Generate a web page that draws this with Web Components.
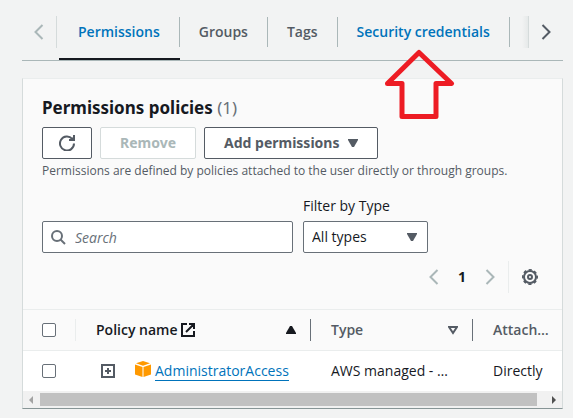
<!DOCTYPE html>
<html lang="en">
<head>
<meta charset="utf-8">
<title>Permissions</title>
<style>
  body {
    margin: 0;
    background: #f2f3f3;
    color: #16191f;
    font: 14px/20px "Open Sans", "Noto Sans", sans-serif;
    --strong: "Noto Sans", "Open Sans", sans-serif;
    --blue: #0073bb;
    --grey: #545b64;
    --muted: #aab7b8;
    --line: #eaeded;
  }
</style>
</head>
<body>
<user-page>
  <tab-bar slot="tabs">
    <tab-item selected>Permissions</tab-item>
    <tab-item>Groups</tab-item>
    <tab-item>Tags</tab-item>
    <tab-item link>Security credentials</tab-item>
  </tab-bar>
  <policy-card>
    <policy-header slot="header" count="(1)">
      Permissions policies
      <action-button slot="actions" kind="icon" label="Refresh"><ui-icon name="refresh"></ui-icon></action-button>
      <action-button slot="actions" disabled>Remove</action-button>
      <action-button slot="actions">Add permissions <ui-icon name="down"></ui-icon></action-button>
      <span slot="description">Permissions are defined by policies attached to the user directly or through groups.</span>
    </policy-header>
    <policy-filters slot="filters"></policy-filters>
    <page-controls slot="filters"></page-controls>
    <policy-table></policy-table>
    <scroll-strip></scroll-strip>
  </policy-card>
  <callout-arrow slot="callout"></callout-arrow>
</user-page>

<script>
const define = (name, html, setup) => {
  const template = document.createElement('template');
  template.innerHTML = '<style>:host,*{box-sizing:border-box}</style>' + html;
  customElements.define(name, class extends HTMLElement {
    constructor() {
      super();
      this.attachShadow({ mode: 'open' }).append(template.content.cloneNode(true));
    }
    connectedCallback() { if (setup) setup(this, this.shadowRoot); }
  });
};

const icons = {
  refresh: [16, '<path d="M13.200 3.800A7 7 0 1 0 15 8.500" fill="none" stroke="currentColor" stroke-width="2"/><path d="M10 5h5V0" fill="none" stroke="currentColor" stroke-width="2"/><path d="M11 5l4-4v4z" fill="currentColor"/>'],
  down: [10, '<path d="M0 1h10v1L6 9H4L0 2z" fill="currentColor"/>'],
  up: [10, '<path d="M0 9h10V8L6 1H4L0 8z" fill="currentColor"/>'],
  sort: [10, '<path d="M1 2h8L5 8z" fill="none" stroke="currentColor" stroke-width="2"/>'],
  prev: [16, '<path d="M11.500 1L4.500 8l7 7" fill="none" stroke="currentColor" stroke-width="2"/>'],
  next: [16, '<path d="M4.500 1l7 7-7 7" fill="none" stroke="currentColor" stroke-width="2"/>'],
  search: [16, '<circle cx="7" cy="7" r="5" fill="none" stroke="currentColor" stroke-width="2"/><path d="M10.500 10.500L15 15" stroke="currentColor" stroke-width="2"/>'],
  gear: [16, '<circle cx="8" cy="8" r="6" fill="none" stroke="currentColor" stroke-width="2"/><circle cx="8" cy="8" r="7.200" fill="none" stroke="currentColor" stroke-width="1.600" stroke-dasharray="3.200 2.455" stroke-dashoffset="1.600"/><circle cx="8" cy="8" r="2" fill="none" stroke="currentColor" stroke-width="2"/>'],
  external: [14, '<path d="M6 1H1v12h12V8M8 1h5v5M13 1L5 9" fill="none" stroke="currentColor" stroke-width="2"/>'],
  plus: [14, '<path d="M1 1h12v12H1zM4 7h6M7 4v6" fill="none" stroke="currentColor" stroke-width="2"/>'],
  cube: [16, '<path d="M0 3.500L7.500 6v10L0 13.500zM16 3.500L8.500 6v10l7.500-2.500zM8 0l7 2.300L8 4.700 1 2.300z" fill="#f90"/>'],
};
define('ui-icon', `<style>:host{display:inline-flex;flex:none}svg{display:block}</style>`, (el, root) => {
  const [size, body] = icons[el.getAttribute('name')];
  root.innerHTML += `<svg width="${size}" height="${size}" viewBox="0 0 ${size} ${size}" aria-hidden="true">${body}</svg>`;
});

define('user-page', `<style>
  :host{display:block;padding:16px 10px 9px 22px}
</style><slot name="tabs"></slot><slot></slot><slot name="callout"></slot>`);

define('tab-bar', `<style>
  :host{display:flex;align-items:flex-start;height:45px;border-bottom:1px solid var(--muted);margin-bottom:17px}
  button{flex:none;width:35px;height:32px;padding:0;border:0;background:none;color:var(--grey);display:grid;place-items:center}
  .left{color:var(--muted);border-right:1px solid #d5dbdb}
  .right{border-left:1px solid #d5dbdb}
  nav{flex:1;display:flex;overflow:hidden;padding-left:2px}
  .fade{flex:none;width:6px;height:32px;background:linear-gradient(90deg,transparent,#e6e9e9)}
</style>
<button class="left" aria-label="Scroll left" disabled><ui-icon name="prev"></ui-icon></button>
<nav><slot></slot></nav><span class="fade"></span>
<button class="right" aria-label="Scroll right"><ui-icon name="next"></ui-icon></button>`);

define('tab-item', `<style>
  :host{display:block;flex:none;height:44px;color:var(--grey);font-weight:600}
  a{display:block;height:30px;margin-top:1px;padding:5px 19px 0;border-right:1px solid var(--muted);color:inherit;text-decoration:none}
  :host([selected]),:host([link]){color:var(--blue)}
  :host([selected]){border-bottom:2px solid #16191f}
</style><a href="#"><slot></slot></a>`);

define('policy-card', `<style>
  :host{display:block;background:#fafafa;border:1px solid #d5dbdb;border-top-color:#eaeded;border-bottom-color:#879596}
  .top{padding:18px 19px 16px}
</style><div class="top"><slot name="header"></slot><slot name="filters"></slot></div><slot></slot>`);

define('policy-header', `<style>
  :host{display:block}
  h2{margin:0 0 8px;font:700 17px/22px var(--strong)}
  h2 span{font-weight:400;color:#687078}
  .actions{display:flex;gap:8px}
  p{margin:4px 0 0;font-size:12px;line-height:16px;color:var(--grey)}
</style><h2><slot></slot><span></span></h2><div class="actions"><slot name="actions"></slot></div><p><slot name="description"></slot></p>`,
(el, root) => { root.querySelector('h2 span').textContent = el.getAttribute('count'); });

define('action-button', `<style>
  :host{display:block}
  button{display:flex;align-items:center;gap:9px;height:32px;padding:0 19px;border:1px solid var(--grey);border-radius:2px;background:#fff;color:var(--grey);font:700 14px/20px var(--strong);white-space:nowrap}
  :host([kind=icon]) button{padding:0 16px}
  button:disabled{border-color:#d5dbdb;color:var(--muted)}
</style><button type="button"><slot></slot></button>`, (el, root) => {
  const button = root.querySelector('button');
  button.disabled = el.hasAttribute('disabled');
  if (el.hasAttribute('label')) button.setAttribute('aria-label', el.getAttribute('label'));
});

define('policy-filters', `<style>
  :host{display:flex;align-items:flex-end;gap:10px;margin-top:17px}
  .search{display:grid;flex:0 1 251px;align-items:center}
  .search>*,.pick>*{grid-area:1/1}
  .search ui-icon{margin-left:8px;color:#687078}
  input,select{width:100%;height:32px;border:1px solid #687078;border-radius:2px;background:#fff;color:inherit;font:inherit;margin:0}
  input{padding:0 8px 0 32px}
  input::placeholder{font-style:italic;color:#687078;opacity:1}
  .type{width:125px}
  label{display:block;margin-bottom:5px}
  .pick{display:grid;align-items:center}
  .pick ui-icon{justify-self:end;margin-right:11px;color:var(--grey);pointer-events:none}
  select{appearance:none;padding:0 8px}
</style>
<div class="search"><input type="search" placeholder="Search" aria-label="Search"><ui-icon name="search"></ui-icon></div>
<div class="type"><label for="type">Filter by Type</label><div class="pick"><select id="type"><option>All types</option></select><ui-icon name="down"></ui-icon></div></div>`);

define('page-controls', `<style>
  :host{display:flex;justify-content:flex-end;align-items:center;height:32px;margin-top:8px}
  button{display:grid;place-items:center;padding:0;border:0;background:none;color:var(--muted);font:inherit}
  .num{width:40px;color:#16191f;font:700 14px/20px var(--strong)}
  .gear{height:32px;margin-left:10px;padding:0 5px 0 13px;border-left:1px solid var(--line);color:var(--grey)}
</style>
<button aria-label="Previous page" disabled><ui-icon name="prev"></ui-icon></button>
<button class="num">1</button>
<button aria-label="Next page" disabled><ui-icon name="next"></ui-icon></button>
<button class="gear" aria-label="Preferences"><ui-icon name="gear"></ui-icon></button>`);

define('policy-table', `<style>
  :host{display:block}
  table{width:100%;table-layout:fixed;border-collapse:separate;border-spacing:0}
  th,td{padding:0;height:40px;text-align:left;vertical-align:middle;white-space:nowrap}
  th{height:42px;border-top:1px solid var(--line);border-bottom:1px solid var(--line);color:var(--grey);font-weight:600}
  td{background:#fff}
  .check{width:53px}.name{width:235px}.kind{width:162px}
  .cell{display:flex;align-items:center;gap:4px;height:22px;padding-left:20px}
  .check .cell,td:first-child .cell{padding-left:19px}
  th .cell{border-right:1px solid #687078;padding-right:14px}
  th.check .cell{border-color:var(--line)}
  th:last-child .cell{border:0;padding-right:8px}
  .cell>.end{margin-left:auto}
  .dark{color:#16191f}
  input{appearance:none;width:14px;height:14px;margin:0;border:1px solid #687078;border-radius:2px;background:#fff}
  td .name-cell{padding-left:25px}
  .name-cell ui-icon:first-child{color:var(--grey);margin-right:16px}
  .name-cell ui-icon+ui-icon{margin-bottom:4px}
  a{color:var(--blue);text-decoration:none;border-bottom:1px solid var(--blue);line-height:18px}
</style>
<table><thead><tr>
<th class="check"><div class="cell"><input type="checkbox" aria-label="Select all policies"></div></th>
<th class="name dark"><div class="cell">Policy name <ui-icon name="external"></ui-icon><ui-icon class="end" name="up"></ui-icon></div></th>
<th class="kind"><div class="cell">Type<ui-icon class="end" name="sort"></ui-icon></div></th>
<th><div class="cell">Attach…</div></th>
</tr></thead><tbody><tr>
<td><div class="cell"><input type="checkbox" aria-label="Select AdministratorAccess"></div></td>
<td><div class="cell name-cell"><ui-icon name="plus"></ui-icon><ui-icon name="cube"></ui-icon><a href="#">AdministratorAccess</a></div></td>
<td><div class="cell">AWS managed - …</div></td>
<td><div class="cell">Directly</div></td>
</tr></tbody></table>`);

define('scroll-strip', `<style>
  :host{display:flex;align-items:center;justify-content:space-between;height:17px;background:#f1f1f1;padding:0 6px}
  .thumb{flex:1;height:13px;margin:0 15px 0 7px;background:#c1c1c1}
  svg{display:block}
</style>
<svg width="4" height="8" viewBox="0 0 4 8"><path d="M4 0v8L0 4z" fill="#a3a3a3"/></svg>
<div class="thumb"></div>
<svg width="4" height="8" viewBox="0 0 4 8"><path d="M0 0v8l4-4z" fill="#505050"/></svg>`);

define('callout-arrow', `<style>
  :host{position:absolute;left:384px;top:49px;pointer-events:none}
  svg{display:block}
</style><svg width="71" height="71" viewBox="0 0 71 71"><path d="M35 3.500L67.500 34.500H52V67.500H18V34.500H3.500z" fill="none" stroke="#ed1c24" stroke-width="5" stroke-linejoin="round"/></svg>`);
</script>
</body>
</html>
